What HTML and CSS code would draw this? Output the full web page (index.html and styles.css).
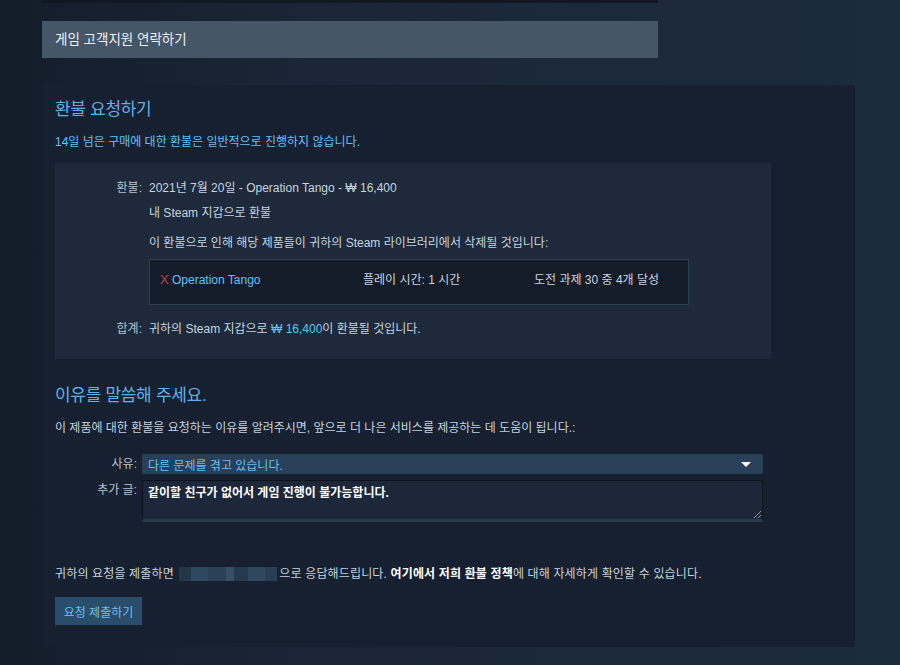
FILE: index.html
```html
<!DOCTYPE html>
<html lang="ko">
<head>
    <meta charset="UTF-8">
    <meta name="viewport" content="width=device-width, initial-scale=1.0">
    <title>환불 요청하기</title>
    <link rel="stylesheet" href="styles.css">
</head>
<body>
    <div class="page">
        <div class="topbar"></div>
        <div class="contact">게임 고객지원 연락하기</div>

        <div class="panel">
            <h2 class="title">환불 요청하기</h2>
            <p class="notice">14일 넘은 구매에 대한 환불은 일반적으로 진행하지 않습니다.</p>

            <div class="summary">
                <div class="row">
                    <span class="label">환불:</span>
                    <span>2021년 7월 20일 - Operation Tango - ₩ 16,400</span>
                </div>
                <div class="row gap-small">
                    <span class="label"></span>
                    <span>내 Steam 지갑으로 환불</span>
                </div>
                <div class="row gap-mid">
                    <span class="label"></span>
                    <span>이 환불으로 인해 해당 제품들이 귀하의 Steam 라이브러리에서 삭제될 것입니다:</span>
                </div>
                <div class="row gap-box">
                    <span class="label"></span>
                    <div class="games">
                        <span class="game-name"><span class="remove">X</span> Operation Tango</span>
                        <span>플레이 시간: 1 시간</span>
                        <span>도전 과제 30 중 4개 달성</span>
                    </div>
                </div>
                <div class="row gap-total">
                    <span class="label">합계:</span>
                    <span>귀하의 Steam 지갑으로 <span class="price">₩ 16,400</span>이 환불될 것입니다.</span>
                </div>
            </div>

            <h2 class="title reason-title">이유를 말씀해 주세요.</h2>
            <p class="reason-text">이 제품에 대한 환불을 요청하는 이유를 알려주시면, 앞으로 더 나은 서비스를 제공하는 데 도움이 됩니다.:</p>

            <div class="form">
                <div class="field">
                    <span class="field-label">사유:</span>
                    <div class="select">
                        <span>다른 문제를 겪고 있습니다.</span>
                        <span class="arrow"></span>
                    </div>
                </div>
                <div class="field">
                    <span class="field-label">추가 글:</span>
                    <div class="textarea">
                        같이할 친구가 없어서 게임 진행이 불가능합니다.
                        <svg class="grip" width="8" height="8" viewBox="0 0 8 8">
                            <path d="M8 1L1 8M8 5L5 8" stroke="#8a97a6" stroke-width="1"/>
                        </svg>
                    </div>
                </div>
            </div>

            <p class="footer-note">귀하의 요청을 제출하면 <span class="blur"></span>으로 응답해드립니다. <b>여기에서 저희 환불 정책</b>에 대해 자세하게 확인할 수 있습니다.</p>

            <button class="submit">요청 제출하기</button>
        </div>
    </div>
</body>
</html>
```

FILE: styles.css
```css
* {
    margin: 0;
    padding: 0;
    box-sizing: border-box;
}

body {
    min-height: 100vh;
    background: linear-gradient(90deg, #141d2a 0%, #1a2637 35%, #1c293c 70%, #1d2b3e 100%);
    font-family: "Liberation Sans", "Noto Sans CJK KR", sans-serif;
    font-size: 12px;
    color: #c6d4df;
}

.page {
    padding-left: 42px;
    width: 855px;
}

.topbar {
    width: 616px;
    height: 3px;
    background: #111822;
}

.contact {
    width: 616px;
    height: 37px;
    margin-top: 18px;
    padding-left: 13px;
    line-height: 37px;
    background: #465669;
    color: #eef1f4;
    font-size: 13.5px;
}

.panel {
    margin-top: 27px;
    background: #162030;
    padding: 13px 13px 21px;
    height: 562px;
}

.title {
    font-size: 17px;
    font-weight: normal;
    color: #5fb3e6;
    line-height: 24px;
    letter-spacing: -0.3px;
}

.notice {
    margin-top: 12px;
    color: #66c0f4;
    line-height: 16px;
}

.summary {
    margin-top: 13px;
    background: #1e2a3b;
    width: 716px;
    padding: 16px 0 21px;
}

.row {
    display: flex;
    gap: 7px;
    line-height: 18px;
}

.gap-small {
    margin-top: 7px;
}

.gap-mid {
    margin-top: 12px;
}

.gap-box {
    margin-top: 7px;
}

.gap-total {
    margin-top: 15px;
}

.label {
    width: 87px;
    flex-shrink: 0;
    text-align: right;
    color: #b8c3cd;
}

.games {
    width: 540px;
    height: 46px;
    padding: 11px 10px 0;
    display: grid;
    grid-template-columns: 203px 171px 1fr;
    background: #151c29;
    border: 1px solid #2d3e56;
}

.game-name {
    color: #66c0f4;
}

.remove {
    color: #c0403a;
    font-size: 13px;
}

.price {
    color: #66c0f4;
}

.reason-title {
    margin-top: 25px;
}

.reason-text {
    margin-top: 12px;
    line-height: 16px;
}

.form {
    margin-top: 18px;
    display: flex;
    flex-direction: column;
    gap: 6px;
}

.field {
    display: flex;
    gap: 5px;
}

.field-label {
    width: 82px;
    text-align: right;
    line-height: 20px;
    color: #b8c3cd;
}

.select {
    width: 621px;
    height: 20px;
    padding: 0 6px;
    display: flex;
    justify-content: space-between;
    align-items: center;
    background: #2a4058;
    border-radius: 2px;
    color: #66c0f4;
}

.arrow {
    width: 0;
    height: 0;
    margin-right: 6px;
    border-left: 5px solid transparent;
    border-right: 5px solid transparent;
    border-top: 5px solid #ffffff;
}

.textarea {
    position: relative;
    width: 621px;
    height: 42px;
    padding: 4px 5px;
    background: #1c2839;
    border: 1px solid #0c121b;
    border-bottom: 3px solid #2a3a4e;
    color: #ffffff;
    font-weight: bold;
    line-height: 16px;
}

.grip {
    position: absolute;
    right: 1px;
    bottom: 1px;
}

.footer-note {
    margin-top: 44px;
    line-height: 16px;
    letter-spacing: 0.15px;
}

.footer-note b {
    color: #ffffff;
}

.blur {
    display: inline-block;
    width: 98px;
    height: 14px;
    margin: 0 2px -3px;
    background: linear-gradient(90deg, #24364a 0 12%, #2f4860 12% 30%, #2a4158 30% 48%, #34506a 48% 56%, #27394e 56% 70%, #30485f 70% 88%, #2a3e54 88% 100%);
}

.submit {
    margin-top: 15px;
    width: 87px;
    height: 28px;
    border: none;
    background: #2a4d6b;
    color: #66c0f4;
    font-family: inherit;
    font-size: 12px;
    cursor: pointer;
}

.submit:hover {
    background: #66c0f4;
    color: #ffffff;
}
```
